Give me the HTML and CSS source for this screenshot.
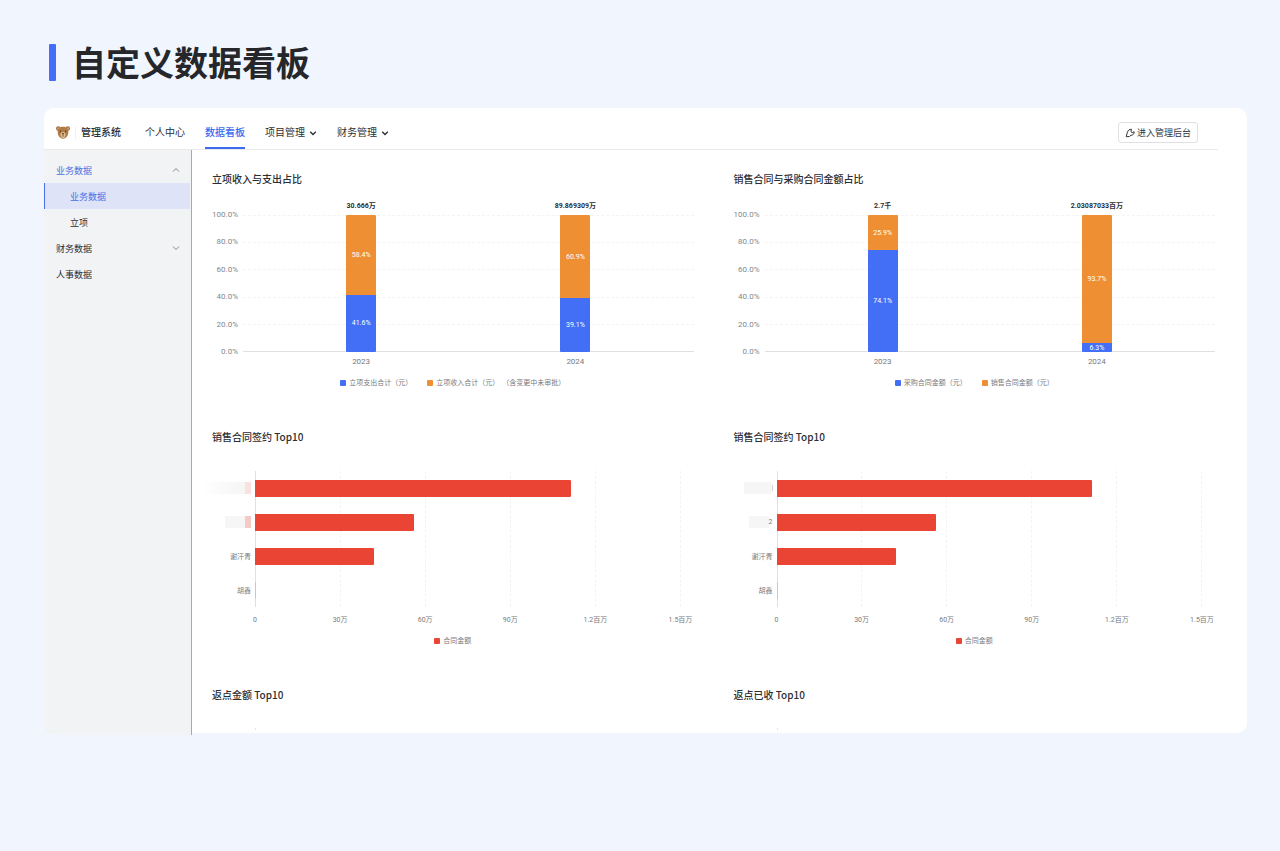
FILE: index.html
```html
<!DOCTYPE html>
<html lang="zh-CN">
<head>
<meta charset="utf-8">
<meta name="viewport" content="width=device-width, initial-scale=1">
<title>自定义数据看板</title>
<link rel="stylesheet" href="styles.css">
</head>
<body>
<h1 class="page-title">自定义数据看板</h1>

<div class="app">
  <header class="topbar">
    <div class="brand">
      <svg class="brand-logo" viewBox="0 0 16 16" aria-hidden="true">
        <circle cx="2.9" cy="3.6" r="2.4" fill="#a87342"/>
        <circle cx="13.1" cy="3.6" r="2.4" fill="#a87342"/>
        <circle cx="2.9" cy="3.7" r="1.1" fill="#dba982"/>
        <circle cx="13.1" cy="3.7" r="1.1" fill="#dba982"/>
        <path d="M8 1.8c3.6 0 5.7 2.2 5.7 5.2 0 4-2 7.6-5.7 7.6S2.300 11 2.300 7C2.300 4 4.400 1.800 8 1.800z" fill="#b07a45"/>
        <ellipse cx="8" cy="10.600" rx="2.600" ry="3.200" fill="#e3c193"/>
        <circle cx="5.200" cy="6.700" r=".8" fill="#5a3d2a"/>
        <circle cx="10.800" cy="6.700" r=".8" fill="#5a3d2a"/>
        <ellipse cx="8" cy="9.200" rx="1.200" ry=".8" fill="#5a3d2a"/>
        <path d="M8 10v1.600M6.700 12.300c.8-.8 1.800-.8 2.600 0" fill="none" stroke="#5a3d2a" stroke-width=".6"/>
      </svg>
      <span class="brand-name">管理系统</span>
    </div>
    <nav class="tabs" aria-label="主导航">
      <a class="tab" href="#">个人中心</a>
      <a class="tab tab-active" href="#" aria-current="page">数据看板</a>
      <a class="tab" href="#">项目管理<svg class="chevron" viewBox="0 0 8 8" aria-hidden="true"><path d="M1.200 2.700 4 5.500l2.800-2.800"/></svg></a>
      <a class="tab" href="#">财务管理<svg class="chevron" viewBox="0 0 8 8" aria-hidden="true"><path d="M1.200 2.700 4 5.500l2.800-2.800"/></svg></a>
    </nav>
    <button class="admin-button" type="button">
      <svg class="admin-icon" viewBox="0 0 10 10" aria-hidden="true"><path d="M1.200 8.700 2.400 4.300C2.900 2.300 4.500 1.100 6.500 1.300L5.900 3.600 7.200 4.700 9.100 3.700C9.400 5.900 7.900 7.300 5.900 7.300L4.400 8.500Z"/></svg>
      进入管理后台
    </button>
  </header>

  <div class="workspace">
    <aside class="sidebar">
      <a class="side-item side-open" href="#">业务数据<svg class="side-chevron" viewBox="0 0 8 8" aria-hidden="true"><path d="M1 5.500 4 2.500l3 3"/></svg></a>
      <a class="side-item side-child side-active" href="#">业务数据</a>
      <a class="side-item side-child" href="#">立项</a>
      <a class="side-item" href="#">财务数据<svg class="side-chevron" viewBox="0 0 8 8" aria-hidden="true"><path d="M1 2.500 4 5.500l3-3"/></svg></a>
      <a class="side-item" href="#">人事数据</a>
    </aside>

    <main class="board">
      <section class="panel">
        <h2 class="panel-title">立项收入与支出占比</h2>
        <div class="stack-chart">
          <div class="y-axis"><span>100.0%</span><span>80.0%</span><span>60.0%</span><span>40.0%</span><span>20.0%</span><span>0.0%</span></div>
          <div class="stack-lines"><i></i><i></i><i></i><i></i><i></i></div>
          <div class="stack-columns">
            <div class="column">
              <span class="total">30.666万</span>
              <div class="bar"><span class="part income" style="height:58.4%">58.4%</span><span class="part spend" style="height:41.6%">41.6%</span></div>
              <span class="year">2023</span>
            </div>
            <div class="column">
              <span class="total">89.869309万</span>
              <div class="bar"><span class="part income" style="height:60.9%">60.9%</span><span class="part spend" style="height:39.1%">39.1%</span></div>
              <span class="year">2024</span>
            </div>
          </div>
        </div>
        <div class="legend">
          <span class="key"><i class="swatch spend"></i>立项支出合计（元）</span>
          <span class="key"><i class="swatch income"></i>立项收入合计（元）<span>（含变更中未审批）</span></span>
        </div>
      </section>

      <section class="panel">
        <h2 class="panel-title">销售合同与采购合同金额占比</h2>
        <div class="stack-chart">
          <div class="y-axis"><span>100.0%</span><span>80.0%</span><span>60.0%</span><span>40.0%</span><span>20.0%</span><span>0.0%</span></div>
          <div class="stack-lines"><i></i><i></i><i></i><i></i><i></i></div>
          <div class="stack-columns">
            <div class="column">
              <span class="total">2.7千</span>
              <div class="bar"><span class="part income" style="height:25.9%">25.9%</span><span class="part spend" style="height:74.1%">74.1%</span></div>
              <span class="year">2023</span>
            </div>
            <div class="column">
              <span class="total">2.03087033百万</span>
              <div class="bar"><span class="part income" style="height:93.7%">93.7%</span><span class="part spend" style="height:6.3%">6.3%</span></div>
              <span class="year">2024</span>
            </div>
          </div>
        </div>
        <div class="legend">
          <span class="key"><i class="swatch spend"></i>采购合同金额（元）</span>
          <span class="key"><i class="swatch income"></i>销售合同金额（元）</span>
        </div>
      </section>

      <section class="panel">
        <h2 class="panel-title">销售合同签约 Top10</h2>
        <div class="rank-chart">
          <div class="names">
            <span><i class="mask mask-wide"></i><i class="mask-end mask-light"></i></span>
            <span><i class="mask"></i><i class="mask-end"></i></span>
            <span>谢汗青</span>
            <span>胡鑫</span>
          </div>
          <div class="rank-lines"><i></i><i></i><i></i><i></i><i></i></div>
          <div class="rank-bars">
            <i style="width:74.2%"></i><i style="width:37.4%"></i><i style="width:28%"></i><i class="rank-zero"></i>
          </div>
          <div class="x-axis"><span>0</span><span>30万</span><span>60万</span><span>90万</span><span>1.2百万</span><span>1.5百万</span></div>
        </div>
        <div class="legend"><span class="key"><i class="swatch contract"></i>合同金额</span></div>
      </section>

      <section class="panel">
        <h2 class="panel-title">销售合同签约 Top10</h2>
        <div class="rank-chart">
          <div class="names">
            <span><i class="mask mask-mid"></i><i class="mask-tick"></i></span>
            <span><i class="mask"></i>2</span>
            <span>谢汗青</span>
            <span>胡鑫</span>
          </div>
          <div class="rank-lines"><i></i><i></i><i></i><i></i><i></i></div>
          <div class="rank-bars">
            <i style="width:74.2%"></i><i style="width:37.4%"></i><i style="width:28%"></i><i class="rank-zero"></i>
          </div>
          <div class="x-axis"><span>0</span><span>30万</span><span>60万</span><span>90万</span><span>1.2百万</span><span>1.5百万</span></div>
        </div>
        <div class="legend"><span class="key"><i class="swatch contract"></i>合同金额</span></div>
      </section>

      <section class="panel">
        <h2 class="panel-title">返点金额 Top10</h2>
        <div class="axis-start"></div>
      </section>

      <section class="panel">
        <h2 class="panel-title">返点已收 Top10</h2>
        <div class="axis-start"></div>
      </section>
    </main>
  </div>
</div>
</body>
</html>
```

FILE: styles.css
```css
* { box-sizing: border-box; }

body {
  margin: 0;
  padding: 42px 33px 40px 44px;
  background: #f1f6fe;
  color: #2b2e33;
  font-family: Roboto, "Noto Sans CJK SC", sans-serif;
  font-size: 10px;
}

a { color: inherit; text-decoration: none; }
i { display: block; font-style: normal; }

.page-title {
  display: flex;
  align-items: center;
  gap: 16px;
  margin: 0 0 26px;
  padding-left: 5px;
  font-family: "Noto Sans CJK SC", sans-serif;
  font-size: 34px;
  font-weight: 700;
  line-height: 40px;
  color: #25272b;
}
.page-title::before {
  content: "";
  width: 7px;
  height: 37px;
  border-radius: 1px;
  background: #436ff6;
}

.app {
  border-radius: 10px;
  background: #fff;
}

/* Top bar */
.topbar {
  display: flex;
  align-items: stretch;
  height: 42px;
  margin-right: 29px;
  padding: 0 20px 0 11px;
  border-bottom: 1px solid #e9eaec;
}
.brand {
  display: flex;
  align-items: center;
  padding-top: 8px;
}
.brand-logo { width: 16px; height: 15px; }
.brand-name {
  margin-left: 4px;
  padding-left: 5px;
  border-left: 1px solid #f0f1f2;
  font-weight: 500;
  line-height: 14px;
}
.tabs {
  display: flex;
  gap: 20px;
  margin-left: 24px;
}
.tab {
  display: flex;
  align-items: center;
  padding-top: 8px;
  line-height: 14px;
}
.tab-active {
  color: #3d69ee;
  font-weight: 500;
  box-shadow: inset 0 -2px #3d69ee;
}
.chevron { width: 8px; height: 8px; margin-left: 4px; }
.chevron path, .side-chevron path {
  fill: none;
  stroke: currentColor;
  stroke-width: 1;
}
.chevron path { stroke-width: 1.3; }
.admin-button {
  display: flex;
  align-items: center;
  gap: 2px;
  height: 21px;
  margin: 14px 0 0 auto;
  padding: 0 6px;
  border: 1px solid #dfe0e3;
  border-radius: 3px;
  background: #fff;
  color: #33363b;
  font: 9px/12px Roboto, "Noto Sans CJK SC", sans-serif;
}
.admin-icon { width: 10px; height: 10px; }
.admin-icon path {
  fill: none;
  stroke: currentColor;
  stroke-width: 1;
  stroke-linejoin: round;
}

/* Sidebar */
.workspace { display: flex; }
.sidebar {
  flex: 0 0 148px;
  margin-bottom: -2px;
  padding-top: 7px;
  border-right: 1px solid #a8a9ab;
  border-bottom-left-radius: 10px;
  background: #f2f3f5;
}
.side-item {
  display: flex;
  align-items: center;
  justify-content: space-between;
  height: 26px;
  margin-right: 1px;
  padding: 0 10px 0 12px;
  font-size: 9px;
}
.side-child { padding-left: 26px; }
.side-open { color: #4a6fe3; }
.side-active {
  padding-left: 25px;
  border-left: 1px solid #4a6fe3;
  background: #dee3f8;
  color: #4a6fe3;
}
.side-chevron { width: 8px; height: 8px; color: #85878b; }

/* Dashboard */
.board {
  flex: 1;
  display: grid;
  grid-template-columns: 1fr 1fr;
  gap: 38px 40px;
  padding: 19px 32px 3px 20px;
}
.panel { min-width: 0; }
.panel-title {
  margin: 0 0 10px;
  font-family: "Noto Sans CJK SC", sans-serif;
  font-size: 10px;
  font-weight: 500;
  line-height: 20px;
}

.stack-chart {
  display: grid;
  grid-template-columns: 26px 1fr;
  column-gap: 5px;
}
.y-axis {
  display: flex;
  flex-direction: column;
  justify-content: space-between;
  height: 149px;
  margin-top: 10px;
  text-align: right;
  font-size: 8px;
  line-height: 12px;
  color: #85878b;
}
.stack-lines, .stack-columns { grid-area: 1 / 2; }
.stack-lines {
  display: grid;
  grid-template-rows: repeat(5, 1fr);
  height: 137px;
  margin-top: 16px;
  border-bottom: 1px solid #dfe0e2;
}
.stack-lines i { border-top: 1px dashed #f4f4f5; }
.stack-columns {
  display: grid;
  grid-template-columns: 1fr 1fr;
  padding: 0 11px;
}
.column {
  display: flex;
  flex-direction: column;
  align-items: center;
}
.total {
  margin: 1px 0 3px;
  font-size: 7px;
  font-weight: 700;
  line-height: 12px;
}
.bar {
  width: 30px;
  height: 137px;
  border-radius: 1px;
  overflow: hidden;
}
.part {
  display: flex;
  align-items: center;
  justify-content: center;
  color: #fff;
  font-size: 7px;
  line-height: 8px;
}
.spend { background: #436ff6; }
.income { background: #ee8f34; }
.contract { background: #ea4435; }
.year {
  margin-top: 4px;
  font-size: 8px;
  line-height: 12px;
  color: #77797d;
}

.legend {
  display: flex;
  justify-content: center;
  gap: 15px;
  margin-top: 9px;
  font-size: 7px;
  line-height: 12px;
  color: #77797d;
}
.key {
  display: flex;
  align-items: center;
  gap: 3px;
}
.swatch { width: 6px; height: 6px; border-radius: 1px; }

.rank-chart {
  display: grid;
  grid-template-columns: 39px 1fr;
  column-gap: 4px;
  padding: 14px 13px 0 0;
}
.names {
  display: grid;
  grid-template-columns: 100%;
  grid-template-rows: repeat(4, 34px);
  font-size: 7px;
  color: #77797d;
}
.names span {
  display: flex;
  align-items: center;
  justify-content: flex-end;
}
.mask {
  flex: none;
  width: 20px;
  height: 12px;
  background: #f6f6f7;
}
.mask-mid { width: 28px; }
.mask-wide {
  width: 40px;
  background: linear-gradient(90deg, #fefefe, #f5f5f6);
}
.mask-end {
  flex: none;
  width: 6px;
  height: 12px;
  background: #f5c9c6;
}
.mask-light { background: #f9e1df; }
.mask-tick {
  width: 1px;
  height: 6px;
  background: #d5d6d8;
}
.rank-lines, .rank-bars { grid-area: 1 / 2; }
.rank-lines {
  display: grid;
  grid-template-columns: repeat(5, 1fr);
  border-left: 1px solid #dfe0e2;
}
.rank-lines i { border-right: 1px dashed #f3f3f4; }
.rank-bars {
  display: grid;
  grid-template-rows: repeat(4, 34px);
  align-items: center;
}
.rank-bars i {
  height: 17px;
  border-radius: 0 1px 1px 0;
  background: #ea4435;
}
.rank-bars .rank-zero { width: 1px; background: #c6c7ca; }
.x-axis {
  grid-column: 2;
  display: flex;
  justify-content: space-between;
  margin-top: 7px;
  font-size: 7px;
  line-height: 12px;
  color: #77797d;
}
.x-axis span {
  display: flex;
  justify-content: center;
  width: 0;
  white-space: nowrap;
}
.axis-start {
  width: 1px;
  height: 2px;
  margin: 23px 0 0 43px;
  background: #e2e3e5;
}
```
